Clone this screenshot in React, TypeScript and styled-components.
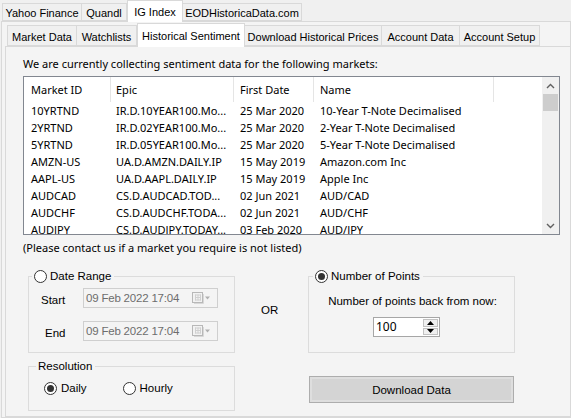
import React from 'react';
import styled, { createGlobalStyle } from 'styled-components';

const SEGOE = `"Noto Sans", "Open Sans", sans-serif`;
const MSSANS = `"Liberation Sans", Arial, sans-serif`;

const GlobalStyle = createGlobalStyle`
  html, body { margin: 0; padding: 0; background: #f0f0f0; }
  * { box-sizing: border-box; }
`;

const Window = styled.div`
  width: 571px;
  height: 418px;
  overflow: hidden;
  background: #f0f0f0;
  font-family: ${MSSANS};
  font-size: 11.5px;
  color: #000;
  display: flex;
  flex-direction: column;
`;

const TabStrip = styled.div<{ $height: number; $pad: number }>`
  display: flex;
  align-items: flex-end;
  height: ${p => p.$height}px;
  padding-left: ${p => p.$pad}px;
  flex-shrink: 0;
  position: relative;
  z-index: 1;
`;

const Tab = styled.div<{ $w: number; $h: number; $lift: number; $active?: boolean }>`
  width: ${p => p.$w}px;
  height: ${p => (p.$active ? p.$h + p.$lift : p.$h)}px;
  margin-bottom: ${p => (p.$active ? -1 : 0)}px;
  padding-top: ${p => (p.$active ? 0 : 2)}px;
  display: flex;
  align-items: center;
  justify-content: center;
  white-space: nowrap;
  font-size: 11px;
  background: ${p => (p.$active ? '#ffffff' : '#f0f0f0')};
  border: 1px solid #d9d9d9;
  border-bottom: ${p => (p.$active ? 'none' : '1px solid #d9d9d9')};
  border-left-width: ${p => (p.$active ? 1 : 0)}px;
  &:first-child { border-left-width: 1px; }
`;

const OuterPage = styled.div`
  flex: 1;
  margin-left: 1px;
  border: 1px solid #d9d9d9;
  background: #f4f4f4;
  padding-left: 3px;
  display: flex;
  flex-direction: column;
`;

const InnerPage = styled.div`
  flex: 1;
  border: 1px solid #d9d9d9;
  border-right: none;
  background: #f4f4f4;
  padding: 9px 0 0 17px;
`;

const Caption = styled.div`
  font-family: ${SEGOE};
  font-size: 11px;
  line-height: 16px;
`;

const ListView = styled.div`
  margin-top: 4px;
  width: 537px;
  height: 159px;
  border: 1px solid #828790;
  background: #fff;
  display: flex;
  overflow: hidden;
  font-family: ${SEGOE};
  font-size: 11px;
`;

const ListBody = styled.div`
  flex: 1;
  overflow: hidden;
`;

const COLS = '87px 123px 80px 180px';

const HeaderRow = styled.div`
  display: grid;
  grid-template-columns: ${COLS};
  height: 25px;
`;

const HeaderCell = styled.div<{ $pad: number }>`
  border-right: 1px solid #e5e5e5;
  padding-left: ${p => p.$pad}px;
  display: flex;
  align-items: center;
  white-space: nowrap;
`;

const Row = styled.div`
  display: grid;
  grid-template-columns: ${COLS};
  height: 17px;
  align-items: center;
`;

const Cell = styled.div<{ $pad: number }>`
  padding-left: ${p => p.$pad}px;
  white-space: nowrap;
  overflow: hidden;
`;

const ScrollBar = styled.div`
  width: 17px;
  background: #f0f0f0;
  display: flex;
  flex-direction: column;
`;

const ScrollArrow = styled.div`
  height: 17px;
  display: flex;
  align-items: center;
  justify-content: center;
`;

const ScrollThumb = styled.div`
  height: 17px;
  margin: 0 1px;
  background: #cdcdcd;
`;

const ScrollTrack = styled.div`
  flex: 1;
`;

const Note = styled.div`
  margin-top: 5px;
  font-family: ${SEGOE};
  font-size: 11px;
  line-height: 16px;
`;

const Lower = styled.div`
  margin: 13px 0 0 5px;
  display: grid;
  grid-template-columns: 207px 73px 207px;
  row-gap: 6px;
`;

const Group = styled.fieldset<{ $pad: string }>`
  margin: 0;
  min-width: 0;
  border: 1px solid #dcdcdc;
  padding: ${p => p.$pad};
`;

const Legend = styled.legend<{ $ml: number }>`
  margin-left: ${p => p.$ml}px;
  padding: 0 3px 0 2px;
  line-height: 15px;
  display: flex;
  align-items: center;
  gap: 3px;
`;

const RadioCircle = styled.span<{ $on?: boolean }>`
  width: 13px;
  height: 13px;
  border-radius: 50%;
  border: 1px solid #333;
  background: #fff;
  display: inline-flex;
  align-items: center;
  justify-content: center;
  flex-shrink: 0;
  &::after {
    content: '';
    width: 7px;
    height: 7px;
    border-radius: 50%;
    background: ${p => (p.$on ? '#333' : 'transparent')};
  }
`;

const Radio = styled.label`
  display: inline-flex;
  align-items: center;
  gap: 4px;
  line-height: 14px;
`;

const PickerRow = styled.div<{ $gap: number }>`
  display: flex;
  align-items: center;
  margin-top: ${p => p.$gap}px;
  padding-left: 12px;
`;

const PickerLabel = styled.span<{ $indent: number }>`
  width: 42px;
  padding-left: ${p => p.$indent}px;
  padding-top: 3px;
`;

const DatePicker = styled.div`
  width: 135px;
  height: 20px;
  border: 1px solid #cfcfcf;
  background: #f4f4f4;
  display: flex;
  align-items: center;
  padding-left: 2px;
  color: #6d6d6d;
  letter-spacing: -0.2px;
`;

const PickerText = styled.span`
  flex: 1;
`;

const PickerIcon = styled.span`
  display: flex;
  align-items: center;
  padding-right: 6px;
`;

const OrCell = styled.div`
  align-self: center;
  padding: 0 0 2px 26px;
`;

const PointsBody = styled.div`
  display: flex;
  flex-direction: column;
  align-items: center;
`;

const PointsText = styled.div`
  line-height: 14px;
  padding-left: 2px;
`;

const Spinner = styled.div`
  margin: 9px 10px 0 0;
  width: 67px;
  height: 20px;
  border: 1px solid #a6a6a6;
  background: #fff;
  display: flex;
`;

const SpinnerValue = styled.span`
  flex: 1;
  padding-left: 2px;
  font-family: ${SEGOE};
  font-size: 12px;
  line-height: 18px;
`;

const SpinButtons = styled.div`
  width: 16px;
  display: flex;
  flex-direction: column;
  gap: 1px;
  padding: 1px 1px 1px 0;
`;

const SpinButton = styled.div`
  flex: 1;
  background: #f0f0f0;
  border: 1px solid #c2c2c2;
  display: flex;
  align-items: center;
  justify-content: center;
`;

const ResolutionBody = styled.div`
  display: flex;
  gap: 36px;
  padding-left: 15px;
`;

const DownloadButton = styled.button`
  margin: 17px 0 0 1px;
  width: 205px;
  height: 27px;
  border: 1px solid #adadad;
  box-shadow: inset 0 0 0 2px #dedede;
  background: #d4d4d4;
  font-family: ${MSSANS};
  font-size: 11.5px;
  color: #000;
  padding: 0;
`;

const Chevron = ({ up }: { up?: boolean }) => (
  <svg width="9" height="6" viewBox="0 0 9 6">
    <path
      d={up ? 'M1 5 L4.5 1.5 L8 5' : 'M1 1 L4.5 4.5 L8 1'}
      fill="none"
      stroke="#606060"
      strokeWidth="1.4"
    />
  </svg>
);

const CalendarIcon = () => (
  <svg width="19" height="12" viewBox="0 0 19 12">
    <rect x="0.5" y="0.5" width="10" height="10" fill="#f2f2f2" stroke="#b8b8b8" />
    <path d="M3 3h6M3 5.5h6M3 8h6M3.5 2.5v6M6 2.5v6M8.5 2.5v6" stroke="#d0d0d0" strokeWidth="1" />
    <path d="M2 11.5h9.5V2" stroke="#d8d8d8" fill="none" />
    <path d="M13 4.5 L18 4.5 L15.5 7.5 Z" fill="#b0b0b0" />
  </svg>
);

const Tri = ({ up }: { up?: boolean }) => (
  <svg width="7" height="4" viewBox="0 0 7 4">
    <path d={up ? 'M0 4 L3.5 0 L7 4 Z' : 'M0 0 L3.5 4 L7 0 Z'} fill="#000" />
  </svg>
);

const outerTabs = [
  { label: 'Yahoo Finance', w: 80 },
  { label: 'Quandl', w: 45 },
  { label: 'IG Index', w: 56, active: true },
  { label: 'EODHistoricaData.com', w: 119 },
];

const innerTabs = [
  { label: 'Market Data', w: 70 },
  { label: 'Watchlists', w: 60 },
  { label: 'Historical Sentiment', w: 108, active: true },
  { label: 'Download Historical Prices', w: 137 },
  { label: 'Account Data', w: 78 },
  { label: 'Account Setup', w: 80 },
];

const markets = [
  ['10YRTND', 'IR.D.10YEAR100.Mo...', '25 Mar 2020', '10-Year T-Note Decimalised'],
  ['2YRTND', 'IR.D.02YEAR100.Mo...', '25 Mar 2020', '2-Year T-Note Decimalised'],
  ['5YRTND', 'IR.D.05YEAR100.Mo...', '25 Mar 2020', '5-Year T-Note Decimalised'],
  ['AMZN-US', 'UA.D.AMZN.DAILY.IP', '15 May 2019', 'Amazon.com Inc'],
  ['AAPL-US', 'UA.D.AAPL.DAILY.IP', '15 May 2019', 'Apple Inc'],
  ['AUDCAD', 'CS.D.AUDCAD.TOD...', '02 Jun 2021', 'AUD/CAD'],
  ['AUDCHF', 'CS.D.AUDCHF.TODA...', '02 Jun 2021', 'AUD/CHF'],
  ['AUDJPY', 'CS.D.AUDJPY.TODAY...', '03 Feb 2020', 'AUD/JPY'],
];

const headers = ['Market ID', 'Epic', 'First Date', 'Name'];
const cellPad = [7, 5, 6, 6];

export default function App() {
  return (
    <>
      <GlobalStyle />
      <Window>
        <TabStrip $height={21} $pad={2}>
          {outerTabs.map(t => (
            <Tab key={t.label} $w={t.w} $h={18} $lift={4} $active={t.active}>
              {t.label}
            </Tab>
          ))}
        </TabStrip>
        <OuterPage>
          <TabStrip $height={24} $pad={2}>
            {innerTabs.map(t => (
              <Tab key={t.label} $w={t.w} $h={21} $lift={3} $active={t.active}>
                {t.label}
              </Tab>
            ))}
          </TabStrip>
          <InnerPage>
            <Caption>We are currently collecting sentiment data for the following markets:</Caption>
            <ListView>
              <ListBody>
                <HeaderRow>
                  {headers.map((h, i) => (
                    <HeaderCell key={h} $pad={cellPad[i]}>{h}</HeaderCell>
                  ))}
                </HeaderRow>
                {markets.map(m => (
                  <Row key={m[0]}>
                    {m.map((c, i) => (
                      <Cell key={i} $pad={cellPad[i]}>{c}</Cell>
                    ))}
                  </Row>
                ))}
              </ListBody>
              <ScrollBar>
                <ScrollArrow><Chevron up /></ScrollArrow>
                <ScrollThumb />
                <ScrollTrack />
                <ScrollArrow><Chevron /></ScrollArrow>
              </ScrollBar>
            </ListView>
            <Note>(Please contact us if a market you require is not listed)</Note>

            <Lower>
              <Group $pad="0 0 11px 0">
                <Legend $ml={3}>
                  <RadioCircle />
                  Date Range
                </Legend>
                <PickerRow $gap={4}>
                  <PickerLabel $indent={0}>Start</PickerLabel>
                  <DatePicker>
                    <PickerText>09 Feb 2022 17:04</PickerText>
                    <PickerIcon><CalendarIcon /></PickerIcon>
                  </DatePicker>
                </PickerRow>
                <PickerRow $gap={13}>
                  <PickerLabel $indent={4}>End</PickerLabel>
                  <DatePicker>
                    <PickerText>09 Feb 2022 17:04</PickerText>
                    <PickerIcon><CalendarIcon /></PickerIcon>
                  </DatePicker>
                </PickerRow>
              </Group>

              <OrCell>OR</OrCell>

              <Group $pad="10px 0 14px 0">
                <Legend $ml={4}>
                  <RadioCircle $on />
                  Number of Points
                </Legend>
                <PointsBody>
                  <PointsText>Number of points back from now:</PointsText>
                  <Spinner>
                    <SpinnerValue>100</SpinnerValue>
                    <SpinButtons>
                      <SpinButton><Tri up /></SpinButton>
                      <SpinButton><Tri /></SpinButton>
                    </SpinButtons>
                  </Spinner>
                </PointsBody>
              </Group>

              <Group $pad="7px 0 15px 0">
                <Legend $ml={7}>Resolution</Legend>
                <ResolutionBody>
                  <Radio><RadioCircle $on />Daily</Radio>
                  <Radio><RadioCircle />Hourly</Radio>
                </ResolutionBody>
              </Group>

              <span />

              <div>
                <DownloadButton>Download Data</DownloadButton>
              </div>
            </Lower>
          </InnerPage>
        </OuterPage>
      </Window>
    </>
  );
}
